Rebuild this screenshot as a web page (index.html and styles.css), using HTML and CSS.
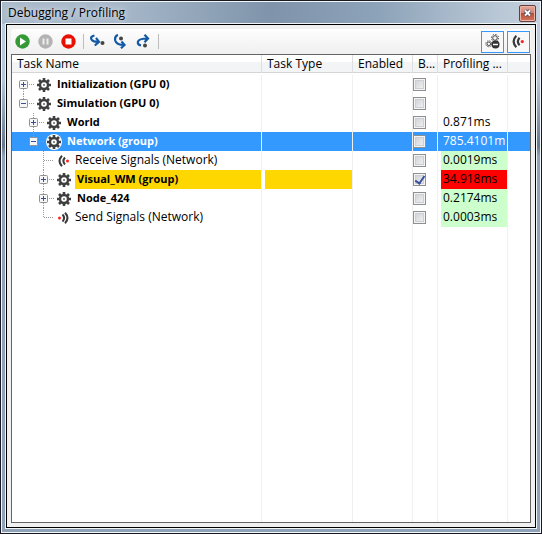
FILE: index.html
```html
<!DOCTYPE html>
<html lang="en">
<head>
<meta charset="utf-8">
<title>Debugging / Profiling</title>
<link rel="stylesheet" href="styles.css">
</head>
<body>
<svg class="defs" aria-hidden="true">
  <symbol id="gear" viewBox="0 0 16 16">
    <circle cx="8" cy="8" r="4" fill="none" stroke="#3f3f3f" stroke-width="2.4"/>
    <path d="M8 1v3M8 12v3M1 8h3M12 8h3M3 3l2 2M11 11l2 2M13 3l-2 2M5 11l-2 2" stroke="#3f3f3f" stroke-width="2.6"/>
    <circle cx="8" cy="8" r="1" fill="#666"/>
  </symbol>
  <symbol id="receive" viewBox="0 0 12 12">
    <path d="M4 .8Q-1 6 4 11.200M7 2.500Q3.800 6 7 9.500" fill="none" stroke="#3a3a3a" stroke-width="2"/>
    <circle cx="9.500" cy="6" r="1.500" fill="#f22"/>
  </symbol>
  <symbol id="send" viewBox="0 0 12 12">
    <path d="M7 .8Q12 6 7 11.200M4.500 2.500Q7.700 6 4.500 9.500" fill="none" stroke="#3a3a3a" stroke-width="2"/>
    <circle cx="1.500" cy="6" r="1.500" fill="#f22"/>
  </symbol>
  <symbol id="up" viewBox="0 0 18 19"><path d="M6.500 0v9" class="dots"/></symbol>
  <symbol id="down" viewBox="0 0 18 19"><path d="M6.500 10v9" class="dots"/></symbol>
  <symbol id="across" viewBox="0 0 18 19"><path d="M7 9.500h10" class="dots"/></symbol>
  <symbol id="box" viewBox="0 0 18 19">
    <path d="M12 9.500h5" class="dots"/>
    <rect x="2.500" y="5.500" width="8" height="8" rx="1" fill="#f6f6f6" stroke="#919191"/>
    <path d="M4 9.500h5" stroke="#3a4f9a"/>
  </symbol>
</svg>
<main class="window">
  <header class="titlebar">
    <h1>Debugging / Profiling</h1>
    <button class="close" aria-label="Close"><svg width="9" height="8" viewBox="0 0 9 8"><path d="M2 1.500l5 5M7 1.500l-5 5" stroke="#46506a" stroke-width="3.600"/><path d="M2 1.500l5 5M7 1.500l-5 5" stroke="#fff" stroke-width="1.800"/></svg></button>
  </header>
  <section class="frame">
    <div class="toolbar">
      <button aria-label="Run"><svg width="15" height="15" viewBox="0 0 15 15"><circle cx="7.500" cy="7.500" r="7.200" fill="#339a35"/><path d="M5 3.500v8l6-4z" fill="#fff"/></svg></button>
      <button aria-label="Pause"><svg width="15" height="15" viewBox="0 0 15 15"><circle cx="7.500" cy="7.500" r="7.200" fill="#b3b3b3"/><path d="M5.500 4.500v6M9.500 4.500v6" stroke="#eee" stroke-width="2"/></svg></button>
      <button aria-label="Stop"><svg width="15" height="15" viewBox="0 0 15 15"><circle cx="7.500" cy="7.500" r="7.200" fill="#e81000"/><path d="M4.500 4.500h6v6h-6z" fill="#fff"/></svg></button>
      <i class="divider"></i>
      <button aria-label="Step into"><svg width="15" height="15" viewBox="0 0 15 15"><path d="M4.500 1.500Q0 2.500 1.500 5.500Q3 8 8 7.800M6 3.800L9 7.800L4.800 11.500" fill="none" stroke="#1158a5" stroke-width="2.200"/><circle cx="12.500" cy="9" r="2" fill="#444"/></svg></button>
      <button aria-label="Step over"><svg width="15" height="15" viewBox="0 0 15 15"><path d="M5 1Q1.500 2 2.200 6.500Q3.500 11 11 11M8.500 7.500L11.500 11L8 14.200" fill="none" stroke="#1158a5" stroke-width="2.200"/><circle cx="8" cy="4.500" r="2" fill="#444"/></svg></button>
      <button aria-label="Step out"><svg width="15" height="15" viewBox="0 0 15 15"><path d="M5 11.500Q1 10.500 2 7.500Q3.500 4.500 11 4.500M8.500 .8L12 4.500L8.500 8.200" fill="none" stroke="#1158a5" stroke-width="2.200"/><circle cx="9" cy="11.500" r="2" fill="#444"/></svg></button>
      <i class="divider"></i>
      <button class="toggle first" aria-label="Hide groups" aria-pressed="true"><svg width="15" height="15" viewBox="0 0 15 15"><g fill="none" stroke="#444"><circle cx="10" cy="4" r="2.300"/><circle cx="10" cy="4" r="3.600" stroke-dasharray="1.400 1.400"/><circle cx="3.800" cy="9.800" r="1.800"/><circle cx="3.800" cy="9.800" r="3" stroke-dasharray="1.200 1.200"/></g><circle cx="10.500" cy="10.500" r="4" fill="#333"/><path d="M8 10.500h5" stroke="#fff" stroke-width="1.500"/></svg></button>
      <button class="toggle" aria-label="Show signals" aria-pressed="true"><svg width="13" height="13"><use href="#receive"/></svg></button>
    </div>
    <div class="list">
      <table>
        <colgroup><col class="c-name"><col class="c-type"><col class="c-enabled"><col class="c-break"><col class="c-time"><col></colgroup>
        <thead><tr><th><span>Task Name</span></th><th><span>Task Type</span></th><th><span>Enabled</span></th><th><span>B...</span></th><th><span>Profiling ...</span></th><th class="rest"><span></span></th></tr></thead>
        <tbody>
          <tr><td><div class="node l0"><svg class="tree"><use href="#down"/><use href="#box"/><path class="plus" d="M6.500 7v5"/></svg><svg class="gear"><use href="#gear"/></svg><b>Initialization (GPU 0)</b></div></td><td></td><td></td><td><input type="checkbox" aria-label="Break on Initialization"></td><td></td><td></td></tr>
          <tr><td><div class="node l0"><svg class="tree"><use href="#up"/><use href="#box"/></svg><svg class="gear"><use href="#gear"/></svg><b>Simulation (GPU 0)</b></div></td><td></td><td></td><td><input type="checkbox" aria-label="Break on Simulation"></td><td></td><td></td></tr>
          <tr><td><div class="node l1"><svg class="tree"><use href="#up"/><use href="#down"/><use href="#box"/><path class="plus" d="M6.500 7v5"/></svg><svg class="gear"><use href="#gear"/></svg><b>World</b></div></td><td></td><td></td><td><input type="checkbox" aria-label="Break on World"></td><td><div class="time">0.871ms</div></td><td></td></tr>
          <tr class="selected"><td><div class="node l1"><svg class="tree"><use href="#up"/><use href="#box"/></svg><svg class="gear"><use href="#gear"/></svg><b>Network (group)</b></div></td><td></td><td></td><td><input type="checkbox" aria-label="Break on Network"></td><td><div class="time">785.4101m</div></td><td></td></tr>
          <tr><td><div class="node l2"><svg class="tree"><use href="#up"/><use href="#down"/><use href="#across"/></svg><svg class="signal"><use href="#receive"/></svg><span>Receive Signals (Network)</span></div></td><td></td><td></td><td><input type="checkbox" aria-label="Break on Receive Signals"></td><td><div class="time fast">0.0019ms</div></td><td></td></tr>
          <tr class="current"><td><div class="node l2"><svg class="tree"><use href="#up"/><use href="#down"/><use href="#box"/><path class="plus" d="M6.500 7v5"/></svg><svg class="gear"><use href="#gear"/></svg><b>Visual_WM (group)</b></div></td><td><div class="fill"></div></td><td></td><td><input type="checkbox" checked aria-label="Break on Visual_WM"></td><td><div class="time slow">34.918ms</div></td><td></td></tr>
          <tr><td><div class="node l2"><svg class="tree"><use href="#up"/><use href="#down"/><use href="#box"/><path class="plus" d="M6.500 7v5"/></svg><svg class="gear"><use href="#gear"/></svg><b>Node_424</b></div></td><td></td><td></td><td><input type="checkbox" aria-label="Break on Node_424"></td><td><div class="time fast">0.2174ms</div></td><td></td></tr>
          <tr><td><div class="node l2"><svg class="tree"><use href="#up"/><use href="#across"/></svg><svg class="signal"><use href="#send"/></svg><span>Send Signals (Network)</span></div></td><td></td><td></td><td><input type="checkbox" aria-label="Break on Send Signals"></td><td><div class="time fast">0.0003ms</div></td><td></td></tr>
          <tr class="filler"><td></td><td></td><td></td><td></td><td></td><td></td></tr>
        </tbody>
      </table>
    </div>
  </section>
</main>
</body>
</html>
```
FILE: styles.css
```css
* { box-sizing: border-box; }
body { margin: 0; font: 12px/18px "Open Sans", "Noto Sans", sans-serif; color: #000; }
button { padding: 0; border: 0; background: none; display: grid; place-items: center; }
svg { display: block; flex: none; }
.defs { position: absolute; width: 0; height: 0; }

.window {
  min-height: 100vh;
  display: flex;
  flex-direction: column;
  padding: 0 4px 4px;
  border: 1px solid #171a22;
  box-shadow: inset 0 0 0 1px #f4f7fa;
  background: linear-gradient(#c1cfdf, #b5c5d8 80px, #68788c 145px, #8fa2b7 155px, #8fa2b7);
}
.titlebar {
  display: flex;
  align-items: center;
  justify-content: space-between;
  height: 22px;
  margin: 1px -3px 0;
  padding: 0 4px 0 6px;
  background: linear-gradient(90deg, #a9bacb, #a9bacb 20%, #7f94ab 50%, #8da3b9 70%, #b5c4d3 90%, #c5d1de);
}
h1 {
  margin: 0;
  font: inherit;
  text-shadow: 0 0 6px #fff;
}
.close {
  width: 17px;
  height: 17px;
  border: 1px solid #6c3a38;
  border-radius: 2px;
  background: linear-gradient(#e3a698, #d78475 45%, #be4a32 50%, #d0785f);
  box-shadow: inset 0 0 0 1px #e9b5a9;
}
.frame {
  flex: 1;
  display: flex;
  flex-direction: column;
  margin: 0 1px 1px;
  padding: 4px;
  border: 1px solid #000;
  outline: 1px solid #f2f5f8;
  background: #f0f0f0;
}
.toolbar {
  display: flex;
  align-items: center;
  gap: 8px;
  height: 25px;
  padding: 0 1px 0 4px;
  border-radius: 3px;
  background: linear-gradient(#fdfdfd, #f0f0f0);
}
.divider { width: 1px; height: 15px; margin: 0 -2px 0 -1px; background: #bdbdbd; }
.toggle {
  width: 23px;
  height: 22px;
  border: 1px solid #3399ff;
  background: #f8f8f8;
}
.toggle + .toggle { margin-left: -5px; }
.first { margin-left: auto; }

.list {
  flex: 1;
  display: grid;
  border: 1px solid #646464;
  background: #fff;
}
table { width: 100%; height: 100%; border-collapse: separate; border-spacing: 0; table-layout: fixed; }
.c-name { width: 250px; }
.c-type { width: 91px; }
.c-enabled { width: 60px; }
.c-break { width: 25px; }
.c-time { width: 70px; }
th { height: 20px; padding: 0 0 2px; font-weight: normal; text-align: left; vertical-align: top; }
th span {
  display: block;
  height: 18px;
  padding-left: 5px;
  border-right: 1px solid #dedfe1;
  border-bottom: 1px solid #d5d5d5;
  background: linear-gradient(#fff 40%, #f3f4f6 40%);
  white-space: nowrap;
}
.rest span { border-right: 0; }
td { height: 19px; padding: 0; border-right: 1px solid #f0f0f0; overflow: hidden; }
td:last-child { border-right: 0; }
.filler td { height: auto; }
.selected td { background: #3399ff; color: #fff; }

.node { display: flex; align-items: center; height: 19px; white-space: nowrap; }
.l0 { padding-left: 5px; }
.l1 { padding-left: 15px; }
.l2 { padding-left: 25px; }
.node b, .node span { flex: 1; height: 19px; padding-left: 2px; }
.node b { font-size: 11px; }
.node span { padding-left: 0; }
.tree { width: 18px; height: 19px; }
.tree use { width: 18px; height: 19px; }
.gear { width: 16px; height: 16px; margin: 0 3px 0 1px; border-radius: 8px; }
.signal { width: 12px; height: 12px; margin: 0 5px 0 3px; }
.dots { stroke: #999; stroke-dasharray: 1 1; }
.plus { stroke: #3a4f9a; }
.selected .gear { background: #fff; }
.current b, .fill { background: #ffd700; }
.fill, .time { height: 19px; margin-left: 3px; }
.time { padding-left: 2px; white-space: nowrap; overflow: hidden; }
.fast { background: #ccffcc; }
.slow { background: #ff0000; }

input {
  appearance: none;
  display: grid;
  place-items: center;
  width: 13px;
  height: 13px;
  margin: 0;
  border: 1px solid #8e8f8f;
  background: linear-gradient(135deg, #c9cdd2, #f6f6f6);
  box-shadow: inset 0 0 0 1px #f4f4f4, inset 0 0 0 2px #cbcfd5;
}
input:checked::after {
  content: "";
  width: 4px;
  height: 8px;
  margin-bottom: 1px;
  border: solid #3b4f9b;
  border-width: 0 2px 2px 0;
  transform: rotate(35deg);
}
```
